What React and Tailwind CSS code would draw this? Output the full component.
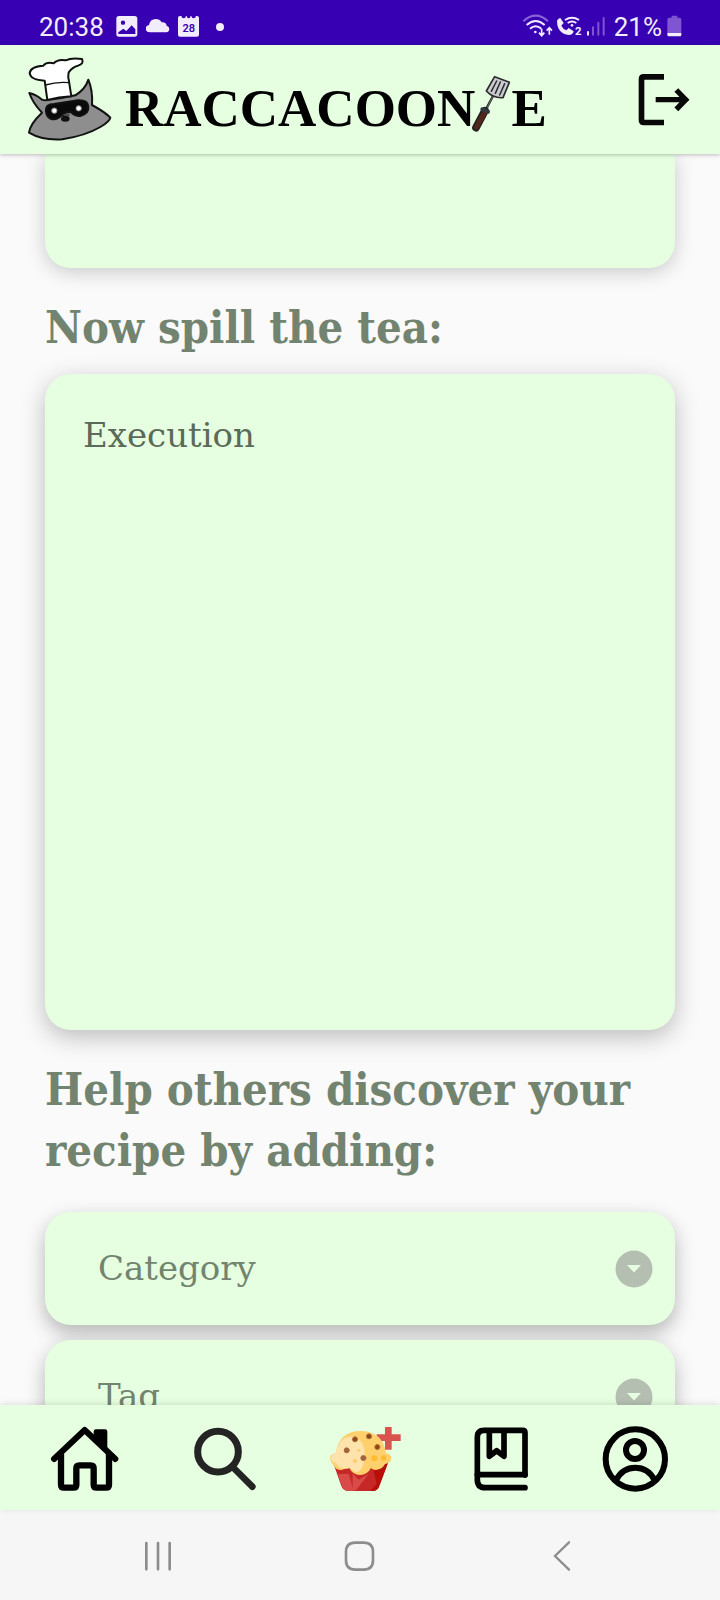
import React from "react";

const ink = "#f3ecfd";

function StatusBar() {
  return (
    <div className="flex h-[45px] shrink-0 items-center justify-between bg-[#3700b3] pt-2 pr-[38px] pl-[39px] font-['Roboto',sans-serif] text-[26px] leading-[30px] text-[#f3ecfd]">
      <div className="flex items-center">
        <span>20:38</span>
        <svg className="ml-3 h-[30px] w-[22px]" viewBox="347 36 66 90" aria-hidden="true">
          <path fill={ink} fillRule="evenodd" d="M356 48h47q8 0 8 8v46q0 8-8 8h-47q-8 0-8-8V56q0-8 8-8ZM354 97v5h51V88l-11-12-16 17-9-7Z" />
          <circle cx="368" cy="68" r="6.500" fill="#3700b3" />
        </svg>
        <svg className="ml-2 h-[30px] w-6" viewBox="438 36 72 90" aria-hidden="true">
          <path fill={ink} d="M449 97q-12-1-12-11 0-9 10-11 3-18 20-18 12 0 18 10 13-1 15 10 8 3 8 10 0 9-9 10Z" />
        </svg>
        <svg className="ml-2 h-[30px] w-[22px]" viewBox="534 36 66 90" aria-hidden="true">
          <path fill={ink} d="M534 54q0-6 6-6h4q1 7 7 7t7-7h2q1 7 6 7t6-7h2q1 7 7 7t7-7h3q6 0 6 6v50q0 6-6 6h-51q-6 0-6-6Z" />
          <text x="566" y="96" textAnchor="middle" fontSize="33" fontWeight="600" fill="#3700b3">28</text>
        </svg>
        <span className="ml-4 size-2 rounded-full bg-[#f3ecfd]" />
      </div>
      <div className="flex items-center">
        <svg className="h-[30px] w-[31px]" viewBox="488 36 93 90" fill="none" stroke={ink} strokeWidth="6" aria-hidden="true">
          <path d="M492 64q37-34 74 0" stroke="#8a63d6" />
          <path d="M502 75q27-24 54 0M512 86q17-14 34 0" />
          <circle cx="528" cy="96" r="4" fill={ink} stroke="none" />
          <path d="M547 86v20M539 98l8 9 8-9M570 104V84M562 92l8-9 8 9" strokeWidth="5" />
        </svg>
        <svg className="ml-[3px] h-[30px] w-[26px]" viewBox="586 36 78 90" fill="none" stroke={ink} aria-hidden="true">
          <path fill={ink} stroke="none" d="M589 65q1-9 10-11l10 15-7 8q5 10 15 14l7-7 15 10q-2 11-15 11-33-4-35-40Z" />
          <path d="M613 60q21-13 42 0M621 69q13-9 26 0" strokeWidth="6" />
          <circle cx="634" cy="76" r="4" fill={ink} stroke="none" />
          <text x="653" y="105" textAnchor="middle" fontSize="34" fontWeight="700" fill={ink} stroke="none">2</text>
        </svg>
        <svg className="ml-1 h-[30px] w-[19px]" viewBox="677 36 57 90" strokeWidth="6" strokeLinecap="round" aria-hidden="true">
          <path d="M683 96v8" stroke={ink} />
          <path d="M698 82v22M714 68v36M730 54v50" stroke="#7f55d2" />
        </svg>
        <span className="ml-[9px]">21%</span>
        <svg className="ml-[5px] h-[30px] w-[15px]" viewBox="920 36 45 90" aria-hidden="true">
          <path fill="#7f55d2" d="M934 47h17v6h6q6 0 6 6v41h-42V59q0-6 6-6h7Z" />
          <path fill={ink} d="M921 99h42v6q0 4-4 4h-34q-4 0-4-4Z" />
        </svg>
      </div>
    </div>
  );
}

function Raccoon() {
  return (
    <svg className="size-[100px]" viewBox="0 0 300 300" stroke="#111" strokeWidth="6" strokeLinejoin="round" aria-hidden="true">
      <path fill="#8e8e8e" d="M28 129q20 4 38 20 11 4 20 0 40-4 80-13 30-18 39-47 14 34 11 76 40 22 55 38-2 12-30 28-44 26-114 37-60 4-100-20 3-26 39-60-28-29-38-59Z" />
      <path fill="#fff" d="M82 150 74 92Q31 90 29 69q3-20 41-22 10-12 31-7 13-14 36-9 18-9 49-4 7 14-12 20-17 4-28 20-3 12 1 27l7 45q-38 2-72 11Z" />
      <path fill="none" strokeWidth="4" d="M76 105q36-11 73-7" />
      <path fill="#0a0a0a" d="M78 184q-2-22 24-22l72-11q30-1 31 19 2 20-22 27-18 4-30-11-16 0-25 6-12 17-31 16-17-4-19-24Z" />
      <circle cx="103" cy="182" r="8" fill="#fff" stroke="#888" strokeWidth="3" />
      <circle cx="176" cy="175" r="8" fill="#fff" stroke="#888" strokeWidth="3" />
      <ellipse cx="136" cy="206" rx="13" ry="9" fill="#111" stroke="none" />
      <path d="M124 198q12-5 25-3" fill="none" strokeWidth="3" />
    </svg>
  );
}

function Spatula() {
  return (
    <svg className="h-[60px] w-10" viewBox="36 45 120 180" strokeLinecap="round" strokeLinejoin="round" aria-hidden="true">
      <path d="m82 149 20-38" stroke="#222" strokeWidth="7" />
      <path d="m84 147 18-36" stroke="#999" strokeWidth="2" />
      <path d="m107 53 44 17-19 46q-30 2-50-20Z" fill="#c9cbd0" stroke="#2c2c2c" strokeWidth="5" />
      <path d="m113 66-16 31M124 69l-15 34M137 74l-15 34" stroke="#2c2c2c" strokeWidth="4.500" />
      <path d="m78 155-27 51" stroke="#222" strokeWidth="23" />
      <path d="m77 160-25 45" stroke="#54271c" strokeWidth="14" />
      <path d="m70 151 17 7" stroke="#333941" strokeWidth="12" />
    </svg>
  );
}

function Header() {
  return (
    <header className="relative z-10 flex h-[109px] shrink-0 items-center justify-between bg-[#e5ffe0] pr-[30px] pl-5 shadow-[0_1px_4px_rgba(0,0,0,0.25)]">
      <div className="flex items-center">
        <Raccoon />
        <h1 className="flex items-center pt-4 pl-[5px] font-['Liberation_Serif',serif] text-[53px] leading-[60px] font-bold text-black">
          RACCACOON
          <span className="-ml-1 pb-2"><Spatula /></span>
          E
        </h1>
      </div>
      <button type="button" aria-label="Log out">
        <svg className="h-[54px] w-[52px]" viewBox="834 220 156 162" fill="none" stroke="#080808" strokeWidth="17" aria-hidden="true">
          <path d="M912 231.500h-61q-6.500 0-6.500 6.500v124q0 6.500 6.500 6.500h61" />
          <path d="M887 300h86M949 271l28 29-28 29" strokeWidth="16" />
          <path d="m976 290 12 10-12 10Z" fill="#080808" stroke="none" />
        </svg>
      </button>
    </header>
  );
}

function PickerField({ id, label }) {
  return (
    <div className="relative rounded-[26px] bg-[#e5ffe0] shadow-[0_8px_20px_rgba(0,0,0,0.28)]">
      <select id={id} aria-label={label} className="block h-[113px] w-full appearance-none rounded-[26px] bg-transparent pr-20 pl-[53px] text-[34px] text-[#72846f] outline-none">
        <option>{label}</option>
      </select>
      <span className="pointer-events-none absolute inset-y-0 right-[22px] flex items-center">
        <svg className="size-[38px]" viewBox="0 0 38 38" aria-hidden="true">
          <circle cx="19" cy="19" r="18.500" fill="#b4bfb1" />
          <path d="M12 15h14l-7 7.500Z" fill="#e5ffe0" />
        </svg>
      </span>
    </div>
  );
}

const headingClass = "font-['DejaVu_Serif_Condensed','DejaVu_Serif',serif] text-[45px] leading-[61px] font-bold text-[#72846f]";

function RecipeForm() {
  return (
    <main className="min-h-0 flex-1 overflow-y-auto bg-[#fafafa] px-[45px] font-['DejaVu_Serif',serif] [scrollbar-width:none]">
      <div className="h-[114px] rounded-b-[26px] bg-[#e5ffe0] shadow-[0_4px_20px_rgba(0,0,0,0.2)]" />
      <h2 className={`${headingClass} pt-[29px] pb-4`}>
        <label htmlFor="execution">Now spill the tea:</label>
      </h2>
      <textarea
        id="execution"
        placeholder="Execution"
        className="block h-[656px] w-full resize-none rounded-[26px] bg-[#e5ffe0] px-[38px] py-[39px] text-[34px] leading-[44px] text-[#5b6a59] shadow-[0_7px_24px_rgba(0,0,0,0.25)] outline-none placeholder:text-[#5b6a59]"
      />
      <h2 className={`${headingClass} pt-[29px] pb-[31px]`}>Help others discover your recipe by adding:</h2>
      <div className="flex flex-col gap-[15px] pb-8">
        <PickerField id="category" label="Category" />
        <PickerField id="tag" label="Tag" />
      </div>
    </main>
  );
}

function NavItem({ label, viewBox, children }) {
  return (
    <a href="#" aria-label={label} className="flex flex-1 justify-center">
      <svg className="size-20 overflow-visible" viewBox={viewBox} fill="none" stroke="#000" strokeLinecap="round" strokeLinejoin="round" aria-hidden="true">
        {children}
      </svg>
    </a>
  );
}

function BottomNav() {
  return (
    <nav className="relative z-10 flex h-[105px] shrink-0 items-center bg-[#e5ffe0] px-[15px] shadow-[0_-1px_6px_rgba(0,0,0,0.12)]">
      <NavItem label="Home" viewBox="42 51 240 240">
        <path d="M191 92q0-7 7-7h27q7 0 7 7v53l-41-39Z" fill="#000" stroke="none" />
        <path d="M72 174 164 87l92 87" strokeWidth="18" />
        <path d="M80 172 164 93l84 79v8H82Z" fill="none" stroke="none" />
        <path d="M93 160v91q0 9 9 9h28q9 0 9-9v-49q0-9 9-9h34q9 0 9 9v49q0 9 9 9h28q9 0 9-9v-91" strokeWidth="19" />
      </NavItem>
      <NavItem label="Search" viewBox="456 51 240 240">
        <circle cx="564" cy="152" r="61" stroke="#242424" strokeWidth="21" />
        <path d="m611 201 56 56" stroke="#242424" strokeWidth="20" />
      </NavItem>
      <NavItem label="Add recipe" viewBox="30 51 240 240">
        <path d="M235 78v68M200 110h72" stroke="#d9544f" strokeWidth="20" strokeLinecap="butt" />
        <path d="m70 187 23 65q5 18 24 18h70q17 0 22-18l25-67Z" fill="#c62828" stroke="none" />
        <path d="m84 220 12 34q5 16 21 16h14l-15-52Z" fill="#d84b48" stroke="none" />
        <path d="m128 218 18 18 30-18-38 50h-10Z" fill="#d84b48" stroke="none" />
        <path d="m190 205 44-20-25 67q-5 18-22 18h-6l19-22Z" fill="#b71009" stroke="none" />
        <path d="M77 157q-16 2-17 15 2 14 19 31 14 8 23 1 10-1 16-3 10 21 32 21t33-21q9 9 23 4 14-4 19-16 19-3 19-18-2-12-16-14-10-67-77-67-63 0-74 67Z" fill="#ffd06b" stroke="none" />
        <path d="M77 157q13-58 60-49 27 15 28 53-4 52-28 52l-19-12q-10 3-18 1-16-1-21-15-15-4-17-17 4-11 15-13Z" fill="#ffe3ad" stroke="none" />
        <g fill="#ffbb32" stroke="none">
          <circle cx="193" cy="172" r="9" />
          <circle cx="135" cy="180" r="7" fill="#ffcf75" />
          <circle cx="221" cy="171" r="8" />
          <circle cx="146" cy="148" r="5" fill="#ffcf75" />
        </g>
        <g fill="#8f4716" stroke="#ad6b34" strokeWidth="3">
          <circle cx="135" cy="115" r="7.500" />
          <circle cx="177" cy="106" r="7.500" />
          <circle cx="202" cy="138" r="7.500" />
          <circle cx="110" cy="148" r="7.500" fill="#9a6246" />
          <circle cx="160" cy="171" r="7.500" fill="#9a6246" />
        </g>
      </NavItem>
      <NavItem label="Saved recipes" viewBox="54 51 240 240">
        <g strokeWidth="17">
          <path d="M255 222V95q0-7-7-7H132q-20 0-20 20v128q0 24 24 24h119" />
          <path d="M112 221h143" />
          <path d="M148 90v76l22-17 22 17V90" />
        </g>
      </NavItem>
      <NavItem label="Profile" viewBox="468 51 240 240">
        <g strokeWidth="18">
          <circle cx="586" cy="174" r="89" />
          <circle cx="585" cy="147" r="27" />
          <path d="M529 236q19-36 57-36t57 36" />
        </g>
      </NavItem>
    </nav>
  );
}

function SystemBar() {
  return (
    <div className="flex h-[90px] shrink-0 items-center bg-[#f6f6f6] px-[57px]">
      <button type="button" aria-label="Recent apps" className="flex flex-1 justify-center">
        <svg className="size-10" viewBox="115 106 120 120" stroke="#8d8d8d" strokeWidth="8" strokeLinecap="round" aria-hidden="true">
          <path d="M140 130v79M175 130v79M210 130v79" />
        </svg>
      </button>
      <button type="button" aria-label="Home screen" className="flex flex-1 justify-center">
        <svg className="size-10" viewBox="720 106 120 120" fill="none" stroke="#8d8d8d" strokeWidth="8" aria-hidden="true">
          <path d="M766 129h25q28 0 28 28v25q0 28-28 28h-25q-28 0-28-28v-25q0-28 28-28Z" />
        </svg>
      </button>
      <button type="button" aria-label="Back" className="flex flex-1 justify-center">
        <svg className="size-10" viewBox="1326 106 120 120" fill="none" stroke="#8d8d8d" strokeWidth="7" strokeLinecap="round" aria-hidden="true">
          <path d="m1407 128-42 41 42 41" />
        </svg>
      </button>
    </div>
  );
}

export default function App() {
  return (
    <div className="flex h-screen flex-col">
      <StatusBar />
      <Header />
      <RecipeForm />
      <BottomNav />
      <SystemBar />
    </div>
  );
}
